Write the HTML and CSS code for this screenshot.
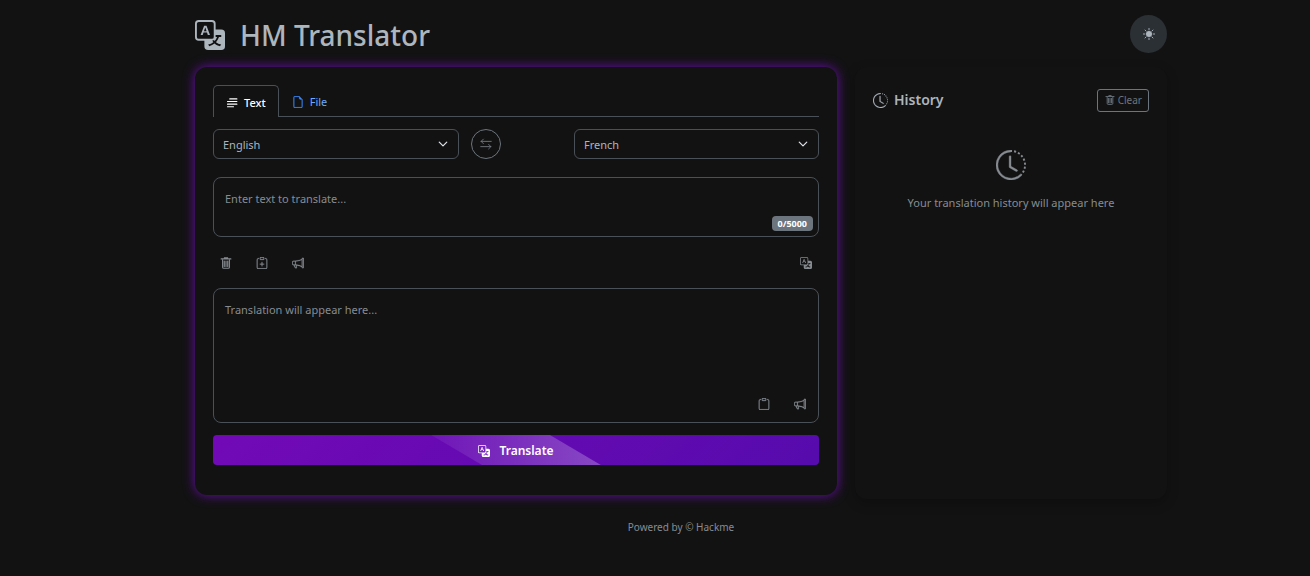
FILE: index.html
```html
<!DOCTYPE html>
<html lang="en">
<head>
<meta charset="utf-8">
<meta name="viewport" content="width=device-width, initial-scale=1">
<title>HM Translator</title>
<link rel="stylesheet" href="styles.css">
</head>
<body>
<svg class="sprite" aria-hidden="true">
  <symbol id="i-translate" viewBox="0 0 16 16"><path d="M4.545 6.714 4.11 8H3l1.862-5h1.284L8 8H6.833l-.435-1.286zm1.634-.736L5.5 3.956h-.049l-.679 2.022z"/><path d="M0 2a2 2 0 0 1 2-2h7a2 2 0 0 1 2 2v3h3a2 2 0 0 1 2 2v7a2 2 0 0 1-2 2H7a2 2 0 0 1-2-2v-3H2a2 2 0 0 1-2-2zm2-1a1 1 0 0 0-1 1v7a1 1 0 0 0 1 1h7a1 1 0 0 0 1-1V2a1 1 0 0 0-1-1zm7.138 9.995q.289.451.63.846c-.748.575-1.673 1.001-2.768 1.292.178.217.451.635.555.867 1.125-.359 2.08-.844 2.886-1.494.777.665 1.739 1.165 2.93 1.472.133-.254.414-.673.629-.89-1.125-.253-2.057-.694-2.82-1.284.681-.747 1.222-1.651 1.621-2.757H14V8h-3v1.047h.765c-.318.844-.74 1.546-1.272 2.13a6 6 0 0 1-.415-.492 2 2 0 0 1-.94.31"/></symbol>
  <symbol id="i-lines" viewBox="0 0 16 16"><path d="M5 2.500h9.500M2 6h12.500M2 9.500h12.500M2 13h8" fill="none" stroke="currentColor" stroke-width="1.500" stroke-linecap="round"/></symbol>
  <symbol id="i-file" viewBox="0 0 16 16"><path d="M14 4.500V14a2 2 0 0 1-2 2H4a2 2 0 0 1-2-2V2a2 2 0 0 1 2-2h5.500zm-3 0A1.500 1.500 0 0 1 9.500 3V1H4a1 1 0 0 0-1 1v12a1 1 0 0 0 1 1h8a1 1 0 0 0 1-1V4.500z" stroke="currentColor" stroke-width=".3"/></symbol>
  <symbol id="i-swap" viewBox="0 0 16 16"><path d="M15 4.500H1.500M4.500 1.500l-3 3 3 3M1 11.500h13.500M11.500 8.500l3 3-3 3" fill="none" stroke="currentColor" stroke-linecap="round" stroke-linejoin="round"/></symbol>
  <symbol id="i-trash" viewBox="0 0 16 16"><path d="M1.500 2.500h13M6 2V1h4v1M3.500 4v9.500q0 1.500 1.500 1.500h6q1.500 0 1.500-1.500V4M5.700 5.500v7M8 5.500v7M10.300 5.500v7" fill="none" stroke="currentColor" stroke-width="1.500" stroke-linecap="round"/></symbol>
  <symbol id="i-clipboard" viewBox="0 0 16 16"><path d="M4 1.500H3a2 2 0 0 0-2 2V14a2 2 0 0 0 2 2h10a2 2 0 0 0 2-2V3.500a2 2 0 0 0-2-2h-1v1h1a1 1 0 0 1 1 1V14a1 1 0 0 1-1 1H3a1 1 0 0 1-1-1V3.500a1 1 0 0 1 1-1h1z" stroke="currentColor" stroke-width=".3"/><path d="M9.500 1a.5.5 0 0 1 .5.500v1a.5.5 0 0 1-.5.500h-3a.5.5 0 0 1-.5-.5v-1a.5.5 0 0 1 .5-.5zm-3-1A1.500 1.500 0 0 0 5 1.500v1A1.500 1.500 0 0 0 6.500 4h3A1.500 1.500 0 0 0 11 2.500v-1A1.500 1.500 0 0 0 9.500 0z" stroke="currentColor" stroke-width=".3"/></symbol>
  <symbol id="i-clipboard-plus" viewBox="0 0 16 16"><use href="#i-clipboard"/><path d="M8 7v5M5.500 9.500h5" stroke="currentColor" stroke-width="1.300" stroke-linecap="round"/></symbol>
  <symbol id="i-megaphone" viewBox="0 0 16 16"><path d="M13 2.500a1.500 1.500 0 0 1 3 0v11a1.500 1.500 0 0 1-3 0v-.214c-2.162-1.241-4.490-1.843-6.912-2.083l.405 2.712A1 1 0 0 1 5.510 15.100h-.548a1 1 0 0 1-.916-.599l-1.850-3.490-.202-.003A2.014 2.014 0 0 1 0 9V7a2.020 2.020 0 0 1 1.992-2.013 75 75 0 0 0 2.483-.075c3.043-.154 6.148-.849 8.525-2.199zm1 0v11a.5.5 0 0 0 1 0v-11a.5.5 0 0 0-1 0m-1 1.350c-2.344 1.205-5.209 1.842-8 2.033v4.233q.27.015.537.036c2.568.189 5.093.744 7.463 1.993zm-9 6.215v-4.130a95 95 0 0 1-1.992.052A1.020 1.020 0 0 0 1 7v2c0 .550.448 1.002 1.006 1.009A61 61 0 0 1 4 10.065m-.657.975 1.609 3.037.1.020h.548l-.002-.014-.443-2.966a68 68 0 0 0-1.722-.082z" stroke="currentColor" stroke-width=".3"/></symbol>
  <symbol id="i-clock" viewBox="0 0 16 16"><path d="M8.515 1.019A7 7 0 0 0 8 1V0a8 8 0 0 1 .589.022zm2.004.450a7 7 0 0 0-.985-.299l.219-.976q.576.129 1.126.342zm1.370.710a7 7 0 0 0-.439-.27l.493-.87a8 8 0 0 1 .979.654l-.615.789a7 7 0 0 0-.418-.302zm1.834 1.790a7 7 0 0 0-.653-.796l.724-.69q.406.429.747.910zm.744 1.352a7 7 0 0 0-.214-.468l.893-.45a8 8 0 0 1 .450 1.088l-.95.313a7 7 0 0 0-.179-.483m.530 2.507a7 7 0 0 0-.1-1.025l.985-.17q.1.580.116 1.170zm-.131 1.538q.05-.254.081-.51l.993.123a8 8 0 0 1-.23 1.155l-.964-.267q.069-.247.120-.501m-.952 2.379q.276-.436.486-.908l.914.405q-.24.540-.555 1.038zm-.964 1.205q.183-.183.350-.378l.758.653a8 8 0 0 1-.401.432z"/><path d="M8 1a7 7 0 1 0 4.950 11.950l.707.707A8.001 8.001 0 1 1 8 0z" stroke="currentColor" stroke-width=".2"/><path d="M7.500 3a.5.5 0 0 1 .5.500v5.210l3.248 1.856a.5.5 0 0 1-.496.868l-3.500-2A.5.5 0 0 1 7 9V3.500a.5.5 0 0 1 .5-.5" stroke="currentColor" stroke-width=".2"/></symbol>
  <symbol id="i-sun" viewBox="0 0 16 16"><circle cx="8" cy="8" r="4"/><path d="M8 .5v2M8 13.500v2M.5 8h2M13.500 8h2M2.700 2.700l1.400 1.400M11.900 11.900l1.400 1.400M2.700 13.300l1.400-1.400M11.900 4.100l1.400-1.400" stroke="currentColor" stroke-width="1.200" stroke-linecap="round"/></symbol>
</svg>
<div class="container">
  <header class="header">
    <h1 class="brand"><svg class="icon icon-brand"><use href="#i-translate"/></svg>HM Translator</h1>
    <button class="theme" type="button" aria-label="Toggle theme"><svg class="icon"><use href="#i-sun"/></svg></button>
  </header>
  <main class="columns">
    <section class="card translator">
      <nav class="tabs">
        <button class="tab active" type="button"><svg class="icon"><use href="#i-lines"/></svg>Text</button>
        <button class="tab" type="button"><svg class="icon"><use href="#i-file"/></svg>File</button>
      </nav>
      <div class="languages">
        <select class="select" aria-label="Source language"><option>English</option><option>French</option></select>
        <button class="swap" type="button" aria-label="Swap languages"><svg class="icon"><use href="#i-swap"/></svg></button>
        <select class="select" aria-label="Target language"><option>French</option><option>English</option></select>
      </div>
      <div class="field">
        <textarea class="area source" aria-label="Text to translate" placeholder="Enter text to translate..."></textarea>
        <span class="count">0/5000</span>
      </div>
      <div class="tools">
        <button class="tool" type="button" aria-label="Clear text"><svg class="icon"><use href="#i-trash"/></svg></button>
        <button class="tool" type="button" aria-label="Paste"><svg class="icon"><use href="#i-clipboard-plus"/></svg></button>
        <button class="tool" type="button" aria-label="Speak source"><svg class="icon"><use href="#i-megaphone"/></svg></button>
        <button class="tool last" type="button" aria-label="Detect language"><svg class="icon"><use href="#i-translate"/></svg></button>
      </div>
      <div class="field">
        <textarea class="area result" aria-label="Translation" placeholder="Translation will appear here..." readonly></textarea>
        <div class="result-tools">
          <button class="tool" type="button" aria-label="Copy"><svg class="icon"><use href="#i-clipboard"/></svg></button>
          <button class="tool" type="button" aria-label="Speak translation"><svg class="icon"><use href="#i-megaphone"/></svg></button>
        </div>
      </div>
      <button class="translate" type="button"><svg class="icon"><use href="#i-translate"/></svg><span>Translate</span></button>
    </section>
    <aside class="card history">
      <div class="history-head">
        <h2 class="history-title"><svg class="icon icon-title"><use href="#i-clock"/></svg>History</h2>
        <button class="clear" type="button"><svg class="icon icon-small"><use href="#i-trash"/></svg>Clear</button>
      </div>
      <div class="empty"><svg class="icon icon-empty"><use href="#i-clock"/></svg><p>Your translation history will appear here</p></div>
    </aside>
  </main>
  <footer class="footer">Powered by © Hackme</footer>
</div>
</body>
</html>
```

FILE: styles.css
```css
* { box-sizing: border-box; }
body { margin: 0; background: #121212; color: #adb5bd; font: 11px/18px "Noto Sans", "Open Sans", sans-serif; }
button, select, textarea { font: inherit; color: inherit; background: none; border: 0; margin: 0; padding: 0; }
h1, h2, p { margin: 0; }
.sprite { position: absolute; width: 0; height: 0; }
.icon { width: 12px; height: 12px; fill: currentColor; flex: none; display: block; }
.icon-brand { width: 30px; height: 30px; }
.icon-title { width: 15px; height: 15px; }
.icon-small { width: 10px; height: 10px; }
.icon-empty { width: 30px; height: 30px; }
.container { max-width: 990px; margin-left: max(0px, calc(50% - 469px)); padding: 15px 9px 0; }
.header { display: flex; justify-content: space-between; align-items: flex-start; padding-bottom: 12px; }
.brand { display: flex; align-items: center; gap: 15px; font-size: 28px; line-height: 40px; font-weight: 500; }
.theme { width: 37px; height: 38px; border-radius: 50%; background: #2b3035; display: grid; place-items: center; }
.columns { display: grid; grid-template-columns: 642fr 312fr; gap: 18px; align-items: start; }
.card { border-radius: 12px; padding: 18px; background: #121212; }
.translator { padding-bottom: 30px; box-shadow: 0 0 12px #6a0dad; }
.history { min-height: 432px; box-shadow: 0 4px 12px rgba(0, 0, 0, .25); }
.tabs { display: flex; border-bottom: 1px solid #495057; margin-bottom: 12px; }
.tab { display: flex; align-items: center; gap: 6px; padding: 2px 12px 0; border: 1px solid transparent; border-bottom: 0; border-radius: 5px 5px 0 0; color: #6ea8fe; height: 31px; }
.tab .icon { color: #3d8bfd; }
.tab.active { color: #fff; border-color: #495057; background: #121212; margin-bottom: -1px; height: 32px; font-weight: 500; }
.tab.active .icon { color: #fff; }
.languages { display: grid; grid-template-columns: 246fr 30px 49px 245fr; column-gap: 12px; align-items: start; margin-bottom: 18px; }
.select { appearance: none; height: 30px; border: 1px solid #495057; border-radius: 6px; padding: 2px 9px 0; background: url("data:image/svg+xml,%3Csvg xmlns='http://www.w3.org/2000/svg' viewBox='0 0 16 16'%3E%3Cpath fill='none' stroke='%23dee2e6' stroke-linecap='round' stroke-linejoin='round' stroke-width='2' d='m2 5 6 6 6-6'/%3E%3C/svg%3E") no-repeat right 10px center / 10px 10px; }
.select:last-child { grid-column: 4; }
.swap { width: 30px; height: 30px; border: 1px solid #6c757d; border-radius: 50%; color: #868c92; display: grid; place-items: center; }
.field { position: relative; display: grid; }
.area { width: 100%; border: 1px solid #495057; border-radius: 8px; padding: 12px 11px; resize: none; display: block; outline: 0; }
.area::placeholder { color: #868c92; opacity: 1; }
.source { height: 60px; }
.result { height: 135px; }
.count { position: absolute; right: 6px; bottom: 6px; background: #6c757d; color: #fff; font-weight: 700; font-size: 9px; line-height: 15px; padding: 0 6px; border-radius: 4px; }
.tools { display: flex; gap: 10px; margin: 12px 0; }
.tool { width: 26px; height: 27px; display: grid; place-items: center; color: #868c92; }
.tool.last { margin-left: auto; }
.result-tools { position: absolute; right: 6px; bottom: 6px; display: flex; gap: 10px; }
.translate { position: relative; overflow: hidden; width: 100%; height: 30px; margin-top: 12px; padding-top: 1px; border-radius: 4px; color: #fff; font-size: 12px; font-weight: 600; display: flex; align-items: center; justify-content: center; gap: 9px; background: linear-gradient(135deg, #7209b7, #560bad); }
.translate::before { content: ""; position: absolute; left: 36%; top: 0; width: 28%; height: 100%; background: linear-gradient(90deg, rgba(255, 255, 255, .05), rgba(255, 255, 255, .25)); clip-path: polygon(0 0, 70% 0, 100% 100%, 30% 100%); }
.translate > * { position: relative; }
.history-head { display: flex; align-items: center; justify-content: space-between; padding-top: 3px; }
.history-title { display: flex; align-items: center; gap: 6px; font-size: 14px; line-height: 24px; font-weight: 600; }
.clear { display: flex; align-items: center; gap: 3px; border: 1px solid #6c757d; border-radius: 3px; color: #6c757d; font-size: 10px; height: 23px; padding: 0 6px 0 7px; }
.empty { display: flex; flex-direction: column; align-items: center; gap: 14px; padding-top: 38px; color: #868c92; }
.footer { text-align: center; font-size: 10px; padding: 19px 0 30px; color: #868c92; }
```
